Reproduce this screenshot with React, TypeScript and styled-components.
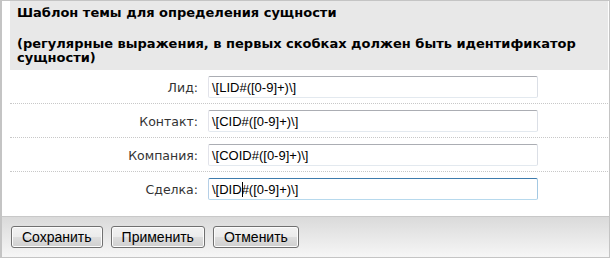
import styled, { createGlobalStyle, css } from 'styled-components';

const GlobalStyle = createGlobalStyle`
  html, body {
    margin: 0;
    padding: 0;
    background: #fff;
  }
`;

const Frame = styled.div`
  box-sizing: border-box;
  width: 610px;
  height: 258px;
  border: 1px solid #c4c4c4;
  border-left-width: 2px;
  display: flex;
  flex-direction: column;
  font-family: "DejaVu Sans", Tahoma, sans-serif;
`;

const Body = styled.div`
  flex: 1;
  padding-left: 8px;
  padding-right: 1px;
  border-bottom: 1px solid #c8c8c8;
`;

const Header = styled.div`
  background: #e8e8e8;
  padding: 4px 7px 5px;
  color: #000;
  font-weight: bold;
  font-size: 13px;
`;

const HeaderTitle = styled.div`
  line-height: 16px;
  margin-bottom: 16px;
`;

const HeaderNote = styled.div`
  line-height: 14px;
`;

const Row = styled.div<{ last?: boolean }>`
  display: grid;
  grid-template-columns: 188px 330px;
  column-gap: 10px;
  align-items: center;
  padding: 6px 0 5px;
  ${({ last }) => (last ? css`
    border-bottom: none;
  ` : css`
    border-bottom: 1px dotted #c8c8c8;
  `)}
`;

const Label = styled.label`
  text-align: right;
  font-size: 12.5px;
  color: #333;
`;

const Field = styled.div<{ focused?: boolean }>`
  box-sizing: border-box;
  height: 22px;
  border: 1px solid;
  border-radius: 2px;
  border-color: #abadb3 #dbdfe6 #e3e9ef #e2e3ea;
  background: #fff;
  display: flex;
  align-items: center;
  padding-left: 3px;
  font-family: "Liberation Sans", Arial, sans-serif;
  font-size: 13px;
  color: #000;
  ${({ focused }) => focused && css`
    border-color: #3d7bad #a4c9e3 #b7d9ed #b5cfe7;
  `}
`;

const Caret = styled.span`
  display: inline-block;
  width: 1px;
  height: 15px;
  background: #000;
  vertical-align: middle;
  margin-right: -1px;
`;

const Footer = styled.div`
  height: 40px;
  background: linear-gradient(#dadada, #f6f6f6);
  display: flex;
  align-items: center;
  gap: 8px;
  padding-left: 9px;
`;

const Button = styled.button`
  box-sizing: border-box;
  height: 22px;
  padding: 0 10px;
  border: 1px solid #707070;
  border-radius: 3px;
  background: linear-gradient(#f2f2f2 0%, #ebebeb 50%, #dddddd 51%, #cfcfcf 100%);
  box-shadow: inset 0 0 0 1px #fcfcfc;
  font-family: "Liberation Sans", Arial, sans-serif;
  font-size: 14px;
  color: #000;
`;

const fields = [
  { label: 'Лид:', value: '\\[LID#([0-9]+)\\]' },
  { label: 'Контакт:', value: '\\[CID#([0-9]+)\\]' },
  { label: 'Компания:', value: '\\[COID#([0-9]+)\\]' },
];

export default function App() {
  return (
    <>
      <GlobalStyle />
      <Frame>
        <Body>
          <Header>
            <HeaderTitle>Шаблон темы для определения сущности</HeaderTitle>
            <HeaderNote>
              (регулярные выражения, в первых скобках должен быть идентификатор сущности)
            </HeaderNote>
          </Header>
          {fields.map((f) => (
            <Row key={f.label}>
              <Label>{f.label}</Label>
              <Field>{f.value}</Field>
            </Row>
          ))}
          <Row last>
            <Label>Сделка:</Label>
            <Field focused>
              {'\\[DID'}
              <Caret />
              {'#([0-9]+)\\]'}
            </Field>
          </Row>
        </Body>
        <Footer>
          <Button>Сохранить</Button>
          <Button>Применить</Button>
          <Button>Отменить</Button>
        </Footer>
      </Frame>
    </>
  );
}
